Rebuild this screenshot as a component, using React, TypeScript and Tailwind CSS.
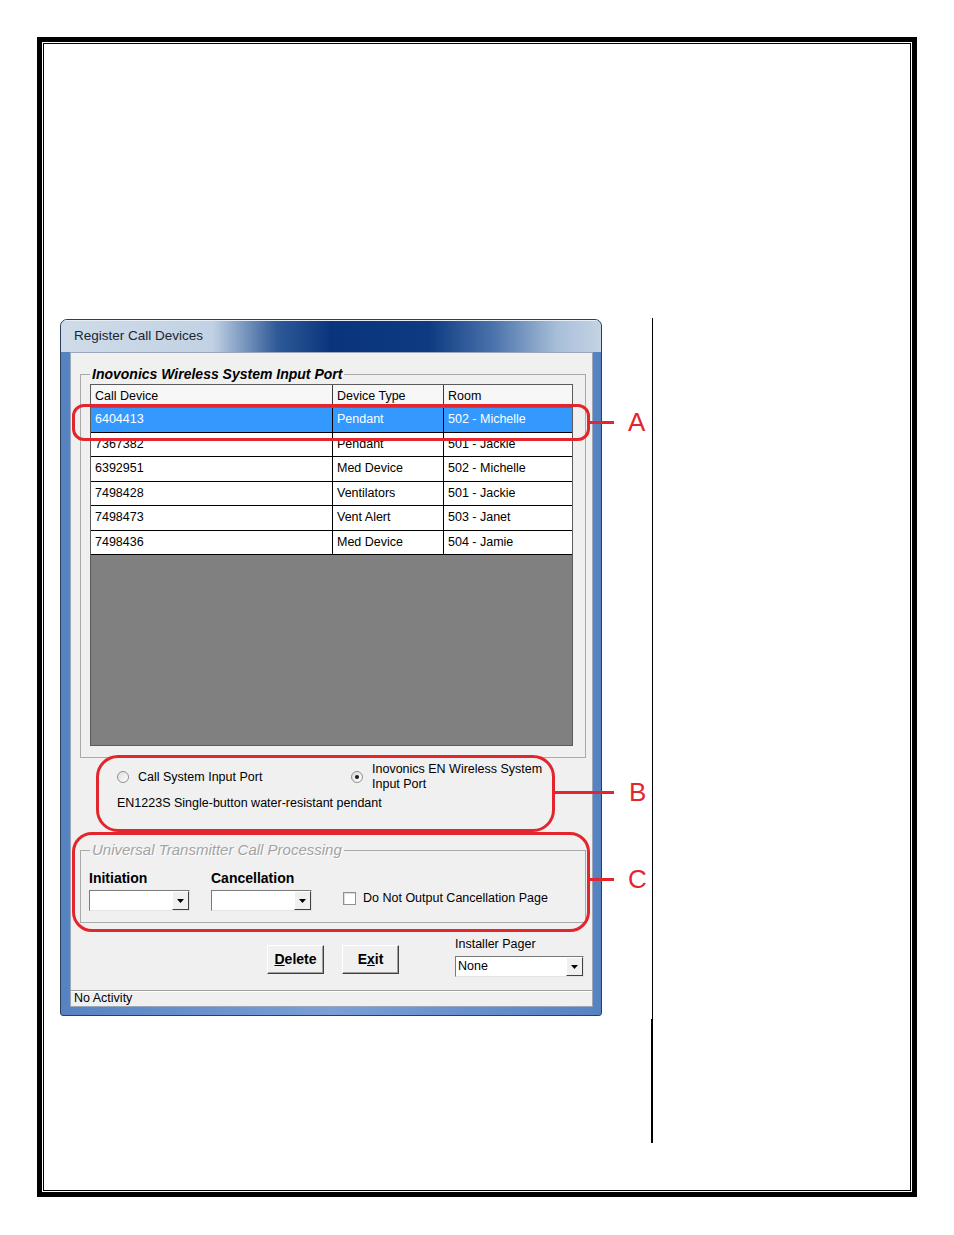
import React from 'react';

const rows = [
    {id: '6404413', type: 'Pendant', room: '502 - Michelle', selected: true},
    {id: '7367382', type: 'Pendant', room: '501 - Jackie'},
    {id: '6392951', type: 'Med Device', room: '502 - Michelle'},
    {id: '7498428', type: 'Ventilators', room: '501 - Jackie'},
    {id: '7498473', type: 'Vent Alert', room: '503 - Janet'},
    {id: '7498436', type: 'Med Device', room: '504 - Jamie'},
];

function DropArrow() {
    return (
        <svg width="7" height="4" viewBox="0 0 7 4">
            <polygon points="0,0 7,0 3.5,4" fill="#000"/>
        </svg>
    );
}

function Combo({className, value}: {className: string; value?: string}) {
    return (
        <div className={`flex h-[21px] border border-t-[#7a7a7a] border-l-[#7a7a7a] border-r-[#e3e3e3] border-b-[#e3e3e3] bg-white ${className}`}>
            <div className="flex-1 truncate pl-[2px] text-[12.5px] leading-[19px] text-black">{value}</div>
            <div className="flex w-[17px] items-center justify-center border border-t-white border-l-white border-r-[#404040] border-b-[#404040] bg-[#f0f0f0]">
                <DropArrow/>
            </div>
        </div>
    );
}

function Radio({checked}: {checked?: boolean}) {
    return (
        <span className="flex h-[12px] w-[12px] shrink-0 items-center justify-center rounded-full border border-[#8e8f8f] bg-[linear-gradient(135deg,#dcdcdc,#ffffff)]">
            {checked && <span className="h-[4px] w-[4px] rounded-full bg-[#1a1a1a]"/>}
        </span>
    );
}

function WinButton({children}: {children: React.ReactNode}) {
    return (
        <button
            type="button"
            className="flex h-[29px] w-[57px] items-center justify-center border border-t-white border-l-white border-r-[#404040] border-b-[#404040] bg-[#f0f0f0] text-[14px] font-bold text-black shadow-[inset_-1px_-1px_0_#a0a0a0]"
        >
            {children}
        </button>
    );
}

function ListView() {
    return (
        <div className="ml-[9px] mt-[2px] flex h-[362px] w-[483px] flex-col border border-[#5a5a5a] bg-[#808080]">
            <div className="flex h-[23px] shrink-0 border-b border-[#6a6a6a] bg-[#f7f7f7] text-[12.5px] leading-[22px] text-black">
                <div className="w-[242px] border-r border-[#3a3a3a] pl-[4px]">Call Device</div>
                <div className="w-[111px] border-r border-[#3a3a3a] pl-[4px]">Device Type</div>
                <div className="flex-1 pl-[4px]">Room</div>
            </div>
            {rows.map((r) => (
                <div
                    key={r.id}
                    className={`flex h-[24.5px] shrink-0 border-b border-black text-[12.5px] leading-[22px] ${r.selected ? 'bg-[#3399ff] text-white' : 'bg-white text-black'}`}
                >
                    <div className="w-[242px] border-r border-black pl-[4px]">{r.id}</div>
                    <div className="w-[111px] border-r border-black pl-[4px]">{r.type}</div>
                    <div className="flex-1 pl-[4px]">{r.room}</div>
                </div>
            ))}
        </div>
    );
}

function RegisterWindow() {
    return (
        <div className="mt-px flex h-[697px] w-[542px] shrink-0 flex-col overflow-hidden rounded-t-[7px] rounded-b-[3px] border border-[#2b3f5c] bg-[linear-gradient(to_right,#5583c2,#7aa0d6_50%,#5583c2)]">
            <div className="flex h-[32px] shrink-0 items-center bg-[linear-gradient(to_right,#cfdbe8_0%,#c2d2e4_28%,#2f5a98_40%,#0a357c_50%,#0d3a80_68%,#4a72ab_80%,#a9bfd9_92%,#c4d3e4_100%)] pl-[13px] shadow-[inset_0_1px_0_#e8eef5]">
                <span className="text-[13.5px] text-[#1b2533]">Register Call Devices</span>
            </div>
            <div className="ml-[9px] mr-[8px] flex h-[655px] shrink-0 flex-col border border-[#9aa7b8] bg-[#f0f0f0] text-black">
                <fieldset className="ml-[9px] mt-[13px] h-[392px] w-[506px] shrink-0 border border-[#a9a9a9]">
                    <legend className="ml-[9px] px-[2px] text-[14px] font-bold italic leading-[16px] text-black">
                        Inovonics Wireless System Input Port
                    </legend>
                    <ListView/>
                </fieldset>

                <div className="h-[84px] shrink-0 pt-[4px] text-[12.5px]">
                    <div className="ml-[46px] flex">
                        <div className="flex h-[30px] w-[234px] items-center gap-[9px]">
                            <Radio/>
                            <span>Call System Input Port</span>
                        </div>
                        <div className="flex items-center gap-[9px]">
                            <Radio checked/>
                            <span className="leading-[15px]">Inovonics EN Wireless System<br/>Input Port</span>
                        </div>
                    </div>
                    <div className="ml-[46px] mt-[3px] leading-[16px]">EN1223S Single-button water-resistant pendant</div>
                </div>

                <fieldset className="ml-[9px] h-[81px] w-[506px] shrink-0 border border-[#a9a9a9]">
                    <legend className="ml-[9px] px-[2px] text-[15px] italic leading-[16px] text-[#a3a3a3] [text-shadow:1px_1px_0_#ffffff]">
                        Universal Transmitter Call Processing
                    </legend>
                    <div className="mt-[12px] flex pl-[8px]">
                        <div className="flex w-[122px] flex-col">
                            <span className="text-[14px] font-bold leading-[16px]">Initiation</span>
                            <Combo className="mt-[4px] w-[101px]"/>
                        </div>
                        <div className="flex w-[132px] flex-col">
                            <span className="text-[14px] font-bold leading-[16px]">Cancellation</span>
                            <Combo className="mt-[4px] w-[101px]"/>
                        </div>
                        <div className="mt-[20px] flex h-[16px] items-center gap-[7px]">
                            <span className="h-[13px] w-[13px] border border-[#8e8f8f] bg-white shadow-[inset_1px_1px_0_#dcdcdc]"/>
                            <span className="text-[12.5px]">Do Not Output Cancellation Page</span>
                        </div>
                    </div>
                </fieldset>

                <div className="flex h-[67px] shrink-0 items-start">
                    <div className="ml-[196px] mt-[22px] flex gap-[18px]">
                        <WinButton><span className="underline">D</span>elete</WinButton>
                        <WinButton>E<span className="underline">x</span>it</WinButton>
                    </div>
                    <div className="ml-[56px] mt-[14px] flex flex-col">
                        <span className="text-[12.5px] leading-[14px]">Installer Pager</span>
                        <Combo className="mt-[5px] w-[129px]" value="None"/>
                    </div>
                </div>

                <div className="h-[16px] shrink-0 border-t border-[#a0a0a0] pl-[3px] text-[12.5px] leading-[15px] shadow-[inset_0_1px_0_#ffffff]">
                    No Activity
                </div>
            </div>
        </div>
    );
}

export default function App() {
    return (
        <div className="min-h-[1235px] bg-white pl-[37px] pt-[37px] font-['Liberation_Sans',Arial,sans-serif]">
            <div className="h-[1160px] w-[880px] border-[5px] border-black p-px">
                <div className="h-full border border-black pl-[16px] pt-[274px]">
                    <div className="relative flex items-start">
                        <RegisterWindow/>
                        <div className="ml-[49px] flex flex-col">
                            <div className="ml-px h-[701px] w-px bg-black"/>
                            <div className="h-[124px] w-[2px] bg-black"/>
                        </div>

                        {/* red annotations drawn over the screenshot */}
                        <div className="absolute left-[12px] top-[86px] h-[37px] w-[518px] rounded-[12px] border-[3px] border-[#e3262d]"/>
                        <div className="absolute left-[530px] top-[103px] h-[3px] w-[24px] bg-[#e3262d]"/>
                        <span className="absolute left-[568px] top-[91px] text-[26px] leading-none text-[#e3262d]">A</span>

                        <div className="absolute left-[36px] top-[437px] h-[77px] w-[459px] rounded-[22px] border-[3px] border-[#e3262d]"/>
                        <div className="absolute left-[495px] top-[473px] h-[3px] w-[59px] bg-[#e3262d]"/>
                        <span className="absolute left-[569px] top-[461px] text-[26px] leading-none text-[#e3262d]">B</span>

                        <div className="absolute left-[12px] top-[514px] h-[100px] w-[518px] rounded-[20px] border-[3px] border-[#e3262d]"/>
                        <div className="absolute left-[530px] top-[560px] h-[3px] w-[24px] bg-[#e3262d]"/>
                        <span className="absolute left-[568px] top-[548px] text-[26px] leading-none text-[#e3262d]">C</span>
                    </div>
                </div>
            </div>
        </div>
    );
}
